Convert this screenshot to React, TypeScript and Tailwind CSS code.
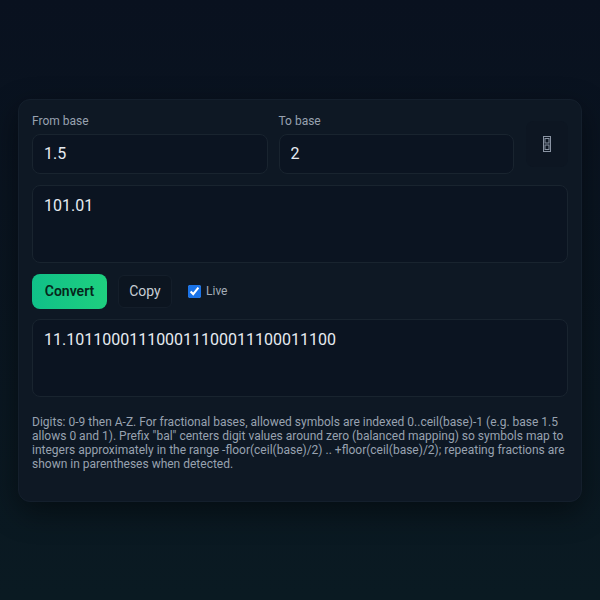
import React, { useState } from 'react';

const SwapGlyph: React.FC = () => (
  <svg width="10" height="18" viewBox="0 0 10 18" fill="none" stroke="#8a94a3" strokeWidth="1">
    <rect x="1.5" y="1.5" width="7" height="15" />
    <rect x="3" y="3.5" width="4" height="4.5" />
    <rect x="3" y="10" width="4" height="4.5" />
  </svg>
);

const App: React.FC = () => {
  const [fromBase, setFromBase] = useState('1.5');
  const [toBase, setToBase] = useState('2');
  const [input, setInput] = useState('101.01');
  const [live, setLive] = useState(true);
  const output = '11.101100011100011100011100011100';

  const swap = () => {
    setFromBase(toBase);
    setToBase(fromBase);
  };

  return (
    <div
      className="min-h-screen w-full flex items-center justify-center px-[18px] bg-gradient-to-b from-[#09111f] to-[#0a1a22]"
      style={{ fontFamily: 'Roboto, "Liberation Sans", sans-serif' }}
    >
      <div className="w-full rounded-xl bg-[#0e1824] border border-[#141f2c] shadow-[0_10px_30px_rgba(0,0,0,0.45)] px-[13px] pt-[13px] pb-[30px]">
        {/* Bases row */}
        <div className="flex gap-[11px]">
          <div className="flex-1 flex flex-col">
            <label className="text-xs text-[#98a2b0] leading-[16px] mb-[5px]">From base</label>
            <input
              value={fromBase}
              onChange={(e) => setFromBase(e.target.value)}
              className="h-[40px] rounded-lg bg-[#0b1421] border border-[#19242f] px-[11px] text-base text-[#e6ebf1] outline-none"
            />
          </div>
          <div className="flex-1 flex flex-col">
            <label className="text-xs text-[#98a2b0] leading-[16px] mb-[5px]">To base</label>
            <input
              value={toBase}
              onChange={(e) => setToBase(e.target.value)}
              className="h-[40px] rounded-lg bg-[#0b1421] border border-[#19242f] px-[11px] text-base text-[#e6ebf1] outline-none"
            />
          </div>
          <button
            onClick={swap}
            className="mt-[8px] ml-px w-[42px] h-[46px] rounded-lg bg-[#0d1622] flex items-center justify-center"
          >
            <SwapGlyph />
          </button>
        </div>

        {/* Input */}
        <textarea
          value={input}
          onChange={(e) => setInput(e.target.value)}
          className="mt-[11px] block w-full h-[78px] resize-none rounded-lg bg-[#0b1421] border border-[#19242f] px-[11px] py-[10px] text-base leading-[20px] text-[#e6ebf1] outline-none"
        />

        {/* Actions */}
        <div className="mt-[11px] flex items-center">
          <button className="h-[35px] w-[75px] rounded-lg bg-gradient-to-r from-[#10c088] to-[#1ed07f] text-sm font-semibold text-[#06261b]">
            Convert
          </button>
          <button className="ml-[11px] h-[33px] w-[54px] rounded-md bg-[#0c1520] border border-[#141e2a] text-sm text-[#c7cdd5]">
            Copy
          </button>
          <label className="ml-[16px] flex items-center gap-[5px] text-xs text-[#a3acb8]">
            <input
              type="checkbox"
              checked={live}
              onChange={(e) => setLive(e.target.checked)}
              className="w-[13px] h-[13px] accent-[#1a73e8]"
            />
            Live
          </label>
        </div>

        {/* Output */}
        <div className="mt-[10px] h-[78px] rounded-lg bg-[#0b1421] border border-[#19242f] px-[11px] py-[10px] text-base leading-[20px] text-[#e6ebf1]">
          {output}
        </div>

        {/* Help */}
        <p className="mt-[18px] text-xs leading-[14px] text-[#98a2b0]">
          Digits: 0-9 then A-Z. For fractional bases, allowed symbols are indexed 0..ceil(base)-1 (e.g. base 1.5 allows 0 and 1). Prefix "bal" centers digit values around zero (balanced mapping) so symbols map to integers approximately in the range -floor(ceil(base)/2) .. +floor(ceil(base)/2); repeating fractions are shown in parentheses when detected.
        </p>
      </div>
    </div>
  );
};

export default App;
